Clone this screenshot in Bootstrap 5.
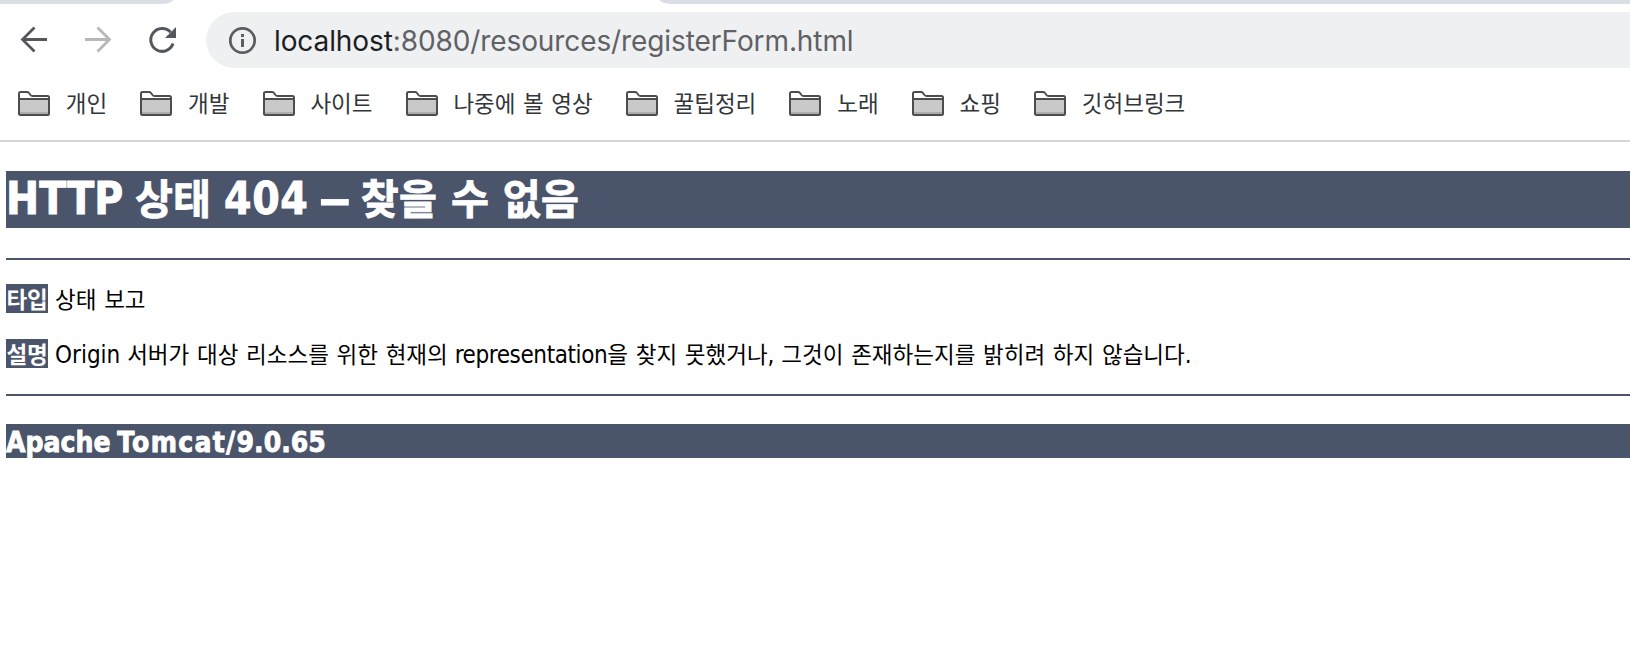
<!DOCTYPE html>
<html lang="ko">

<head>
    <meta charset="UTF-8">
    <meta name="viewport" content="width=device-width, initial-scale=1">
    <title>HTTP 상태 404 – 찾을 수 없음</title>
    <link href="https://cdn.jsdelivr.net/npm/bootstrap@5.3.3/dist/css/bootstrap.min.css" rel="stylesheet">
    <style>
        body {
            font-family: "DejaVu Sans Condensed", "DejaVu Sans", "Noto Sans CJK KR", sans-serif;
            font-stretch: condensed;
            color: #000;
            overflow: hidden;
        }

        /* Browser chrome */
        .tab-strip { height: 4px; }
        .tab-strip div { background: #dadde3; }
        .tab-left { width: 173px; border-bottom-right-radius: 12px 4px; }
        .tab-right { width: 970px; border-bottom-left-radius: 12px 4px; }
        .toolbar { height: 72px; padding: 8px 0 8px 18px; }
        .nav-icons { width: 188px; gap: 32px; }
        .address {
            height: 56px;
            padding-left: 22px;
            background: #eff0f2;
            border-radius: 28px 0 0 28px;
            font: 28px/56px Inter, sans-serif;
            color: #5f6164;
        }
        .url-text { margin-left: 17px; padding-top: 1px; letter-spacing: -.1px; white-space: nowrap; }
        .url-text b { font-weight: 400; color: #1d1e21; }
        .bookmarks {
            height: 66px;
            padding: 0 0 9px 18px;
            gap: 33.1px;
            border-bottom: 2px solid #d6d6d6;
            font: 22.5px/32px "Noto Sans CJK KR", sans-serif;
            color: #323639;
            word-spacing: 1.2px;
        }
        .bookmark { gap: 15.8px; white-space: nowrap; }
        .bookmark span { padding-bottom: 4px; }

        /* Error page */
        .error-page { padding: 29px 0 0 6px; font-size: 24px; line-height: 29px; }
        .error-page h1, .error-page h3, .error-page b { background: #4a546a; color: #fff; }
        .error-page h1, .error-page h3 { font-weight: 700; -webkit-text-stroke: .8px #fff; }
        .error-page h1 { font-size: 44px; line-height: 51px; height: 57px; margin: 0 0 30px; word-spacing: -2px; }
        .error-page h3 { font-size: 28px; line-height: 37px; height: 34px; margin: 28px 0 0; word-spacing: -2px; }
        .error-page p { height: 29px; margin: 0 0 26px; white-space: nowrap; }
        .error-page b { display: inline-block; height: 29px; padding: 0 .4px; vertical-align: top; }
        .rule { height: 2px; background: #4a546a; }
        .ko { font-family: "Noto Sans CJK KR", sans-serif; font-size: .9375em; word-spacing: 1.4px; }
        .error-page h1 .ko { word-spacing: 2px; letter-spacing: .2px; }
        .latin { letter-spacing: -.4px; }
        .product { letter-spacing: 1.3px; }
        .number { margin-left: 1px; letter-spacing: .6px; }
        .dash { display: inline-block; margin: 0 4.5px; transform: scaleX(1.7); }
    </style>
</head>

<body class="bg-white">
    <header>
        <div class="tab-strip d-flex justify-content-between">
            <div class="tab-left"></div>
            <div class="tab-right"></div>
        </div>

        <div class="toolbar d-flex">
            <!-- Back, forward, reload -->
            <div class="nav-icons d-flex align-items-center flex-shrink-0">
                <svg width="32" height="32" viewBox="0 0 32 32" fill="none" stroke="#54575c" stroke-width="2.8">
                    <path d="M29 15.5H5M16.5 3.5l-12 12 12 12" />
                </svg>
                <svg width="32" height="32" viewBox="0 0 32 32" fill="none" stroke="#b5b7b9" stroke-width="2.8">
                    <path d="M3 15.5h24M15.5 3.5l12 12-12 12" />
                </svg>
                <svg width="32" height="32" viewBox="0 0 32 32" fill="none" stroke="#54575c" stroke-width="3">
                    <path d="M24.6 8.2A11.4 11.4 0 1 0 27 19.6" />
                    <path d="M30 3v11H19z" fill="#54575c" stroke="none" />
                </svg>
            </div>
            <div class="address d-flex align-items-center flex-grow-1">
                <svg width="29" height="29" viewBox="0 0 29 29" fill="none" stroke="#5a5d61">
                    <circle cx="14.5" cy="14.5" r="12.2" stroke-width="2.8" />
                    <path d="M14.5 13v8M14.5 8v3" stroke-width="3" />
                </svg>
                <span class="url-text"><b>localhost</b>:8080/resources/registerForm.html</span>
            </div>
        </div>

        <nav class="bookmarks d-flex align-items-center" id="bookmarks"></nav>
    </header>

    <main class="error-page">
        <h1>HTTP <span class="ko">상태</span> <span class="number">404</span> <span class="dash">–</span> <span class="ko">찾을 수 없음</span></h1>
        <div class="rule mb-4"></div>
        <p><b><span class="ko">타입</span></b> <span class="ko">상태 보고</span></p>
        <p><b><span class="ko">설명</span></b> Origin <span class="ko">서버가 대상 리소스를 위한 현재의</span> <span class="latin">representation</span><span class="ko">을 찾지 못했거나</span>, <span class="ko">그것이 존재하는지를 밝히려 하지 않습니다</span>.</p>
        <div class="rule"></div>
        <h3>Apache <span class="product">Tomcat/</span>9.0.65</h3>
    </main>

    <script>
        const folders = ["개인", "개발", "사이트", "나중에 볼 영상", "꿀팁정리", "노래", "쇼핑", "깃허브링크"];

        const folderIcon = `<svg width="32" height="25" viewBox="0 0 32 25">
            <path d="M1 8h30v14.5q0 1.5-1.5 1.5h-27Q1 24 1 22.5z" fill="#c9c9c9"/>
            <path d="M2 22h28" stroke="#adadad" stroke-width="2"/>
            <path d="M1 8V2.5Q1 1 2.5 1H9q1.2 0 2 1l1.5 2q.8 1 2 1h15Q31 5 31 6.5v16q0 1.5-1.5 1.5h-27Q1 24 1 22.5zM1 8h30" fill="none" stroke="#4d4d4d" stroke-width="2"/>
        </svg>`;

        document.getElementById("bookmarks").innerHTML = folders
            .map(name => `<div class="bookmark d-flex align-items-center">${folderIcon}<span>${name}</span></div>`)
            .join("");
    </script>

    <script src="https://cdn.jsdelivr.net/npm/bootstrap@5.3.3/dist/js/bootstrap.bundle.min.js"></script>
</body>

</html>
